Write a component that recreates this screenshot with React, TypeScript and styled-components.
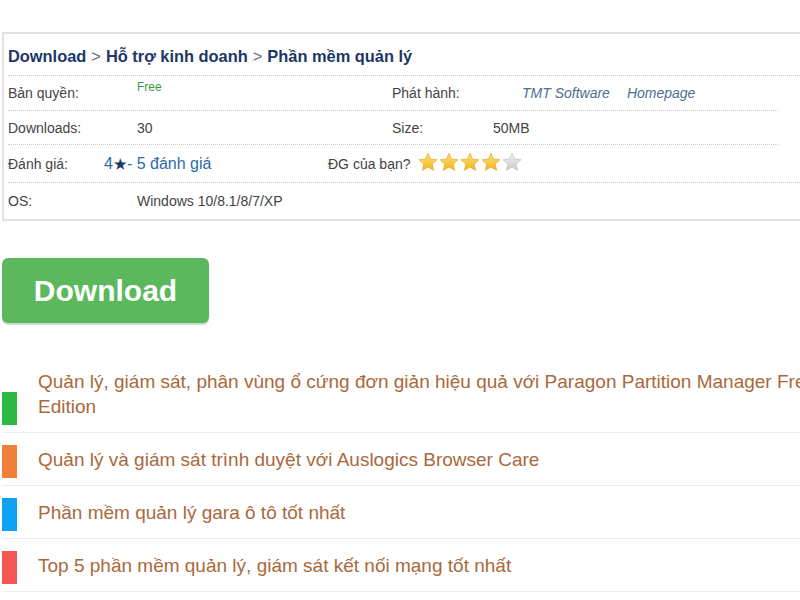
import React from "react";
import styled, { createGlobalStyle } from "styled-components";

const GlobalStyle = createGlobalStyle`
  html, body {
    margin: 0;
    padding: 0;
    background: #fff;
    overflow: hidden;
  }
  body {
    font-family: "Liberation Sans", Arial, sans-serif;
    color: #333;
  }
`;

const Page = styled.div`
  width: 860px;
  padding: 32px 0 0 2px;
`;

const InfoBox = styled.div`
  border: 2px solid #e2e2e2;
  border-right: none;
  padding-left: 4px;
`;

const Breadcrumb = styled.div`
  padding: 12px 0 9px;
  line-height: 20px;
  font-size: 16.4px;
  font-weight: bold;
  color: #1c3766;
  border-bottom: 1px dotted #c8c8c8;

  span {
    font-weight: normal;
    color: #666;
    margin: 0 5px;
  }
`;

const Row = styled.div<{ $h: number; $w?: number; $line?: boolean }>`
  display: flex;
  align-items: center;
  height: ${(p) => p.$h}px;
  width: ${(p) => (p.$w ? `${p.$w}px` : "auto")};
  border-bottom: ${(p) => (p.$line ? "1px dotted #c8c8c8" : "none")};
  font-size: 14px;
`;

const Label = styled.div<{ $w: number }>`
  width: ${(p) => p.$w}px;
  flex: none;
  color: #444;
`;

const Value = styled.div<{ $w?: number }>`
  width: ${(p) => (p.$w ? `${p.$w}px` : "auto")};
  flex: none;
  color: #444;
`;

const Free = styled(Value)`
  align-self: flex-start;
  padding-top: 4px;
  font-size: 12px;
  color: #3e9b3e;
`;

const Publisher = styled.a`
  font-style: italic;
  color: #4d6d94;
  text-decoration: none;
  margin-right: 17px;
`;

const Rating = styled(Value)`
  font-size: 16px;
  color: #2f6aa6;

  b {
    color: #1c3766;
    font-size: 14px;
    margin-left: 1px;
  }
`;

const Stars = styled.div`
  display: flex;
  gap: 1px;
  margin-top: -4px;
`;

const DownloadButton = styled.button`
  display: block;
  margin-top: 37px;
  width: 207px;
  height: 65px;
  border: none;
  border-radius: 6px;
  background: #5cb85c;
  box-shadow: 0 2px 1px #c8dcc8;
  color: #fff;
  font-family: "Liberation Sans", Arial, sans-serif;
  font-size: 30px;
  font-weight: bold;
  cursor: pointer;
`;

const List = styled.ul`
  list-style: none;
  margin: 34px 0 0;
  padding: 0;
  width: 850px;
`;

const Item = styled.li`
  display: flex;
  align-items: flex-end;
  padding: 12px 0 7px;
  border-bottom: 1px solid #ececec;
`;

const Bar = styled.div<{ $color: string }>`
  flex: none;
  width: 15px;
  height: 33px;
  background: ${(p) => p.$color};
  margin-right: 21px;
`;

const ItemText = styled.a`
  font-size: 19px;
  line-height: 25px;
  color: #a9693c;
  text-decoration: none;
  margin-bottom: 6px;
`;

const Star = ({ on, id }: { on: boolean; id: string }) => (
  <svg width="20" height="20" viewBox="0 0 24 24">
    <defs>
      <linearGradient id={id} x1="0" y1="0" x2="0" y2="1">
        <stop offset="0" stopColor={on ? "#ffe27a" : "#f2f2f2"} />
        <stop offset="1" stopColor={on ? "#f1b51c" : "#c9c9c9"} />
      </linearGradient>
    </defs>
    <path
      d="M12 1.5l3.1 7.1 7.7.7-5.8 5.1 1.7 7.6L12 18l-6.7 4 1.7-7.6-5.8-5.1 7.7-.7z"
      fill={`url(#${id})`}
      stroke={on ? "#e0a313" : "#bdbdbd"}
      strokeWidth="0.8"
    />
  </svg>
);

const related = [
  {
    color: "#2db843",
    text: "Quản lý, giám sát, phân vùng ổ cứng đơn giản hiệu quả với Paragon Partition Manager Free Edition",
  },
  { color: "#f07f3a", text: "Quản lý và giám sát trình duyệt với Auslogics Browser Care" },
  { color: "#0ea2f6", text: "Phần mềm quản lý gara ô tô tốt nhất" },
  { color: "#f45656", text: "Top 5 phần mềm quản lý, giám sát kết nối mạng tốt nhất" },
];

export default function App() {
  return (
    <Page>
      <GlobalStyle />
      <InfoBox>
        <Breadcrumb>
          Download<span>&gt;</span>Hỗ trợ kinh doanh<span>&gt;</span>Phần mềm quản lý
        </Breadcrumb>
        <Row $h={34} $w={770} $line>
          <Label $w={129}>Bản quyền:</Label>
          <Free $w={255}>Free</Free>
          <Label $w={130}>Phát hành:</Label>
          <Value>
            <Publisher href="#">TMT Software</Publisher>
            <Publisher href="#">Homepage</Publisher>
          </Value>
        </Row>
        <Row $h={33} $w={770} $line>
          <Label $w={129}>Downloads:</Label>
          <Value $w={255}>30</Value>
          <Label $w={101}>Size:</Label>
          <Value>50MB</Value>
        </Row>
        <Row $h={37} $line>
          <Label $w={96}>Đánh giá:</Label>
          <Rating $w={224}>
            4<b>★</b>- 5 đánh giá
          </Rating>
          <Label $w={90}>ĐG của bạn?</Label>
          <Stars>
            {[0, 1, 2, 3, 4].map((i) => (
              <Star key={i} id={`st${i}`} on={i < 4} />
            ))}
          </Stars>
        </Row>
        <Row $h={36}>
          <Label $w={129}>OS:</Label>
          <Value>Windows 10/8.1/8/7/XP</Value>
        </Row>
      </InfoBox>
      <DownloadButton>Download</DownloadButton>
      <List>
        {related.map((r) => (
          <Item key={r.text}>
            <Bar $color={r.color} />
            <ItemText href="#">{r.text}</ItemText>
          </Item>
        ))}
      </List>
    </Page>
  );
}
